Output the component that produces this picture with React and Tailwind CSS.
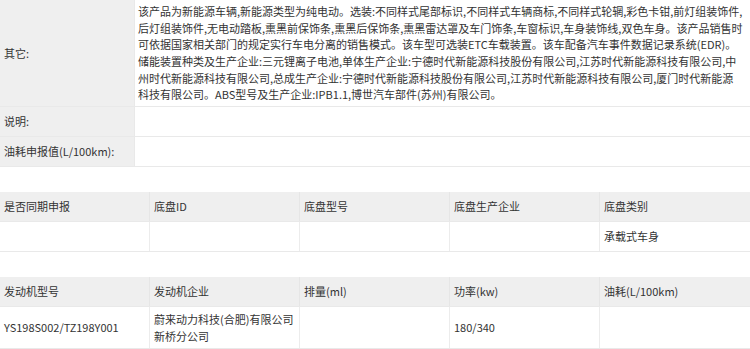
const FONT = { fontFamily: '"Microsoft YaHei", "Noto Sans CJK SC", "Noto Sans", sans-serif' };

const otherLines = [
  '该产品为新能源车辆,新能源类型为纯电动。选装:不同样式尾部标识,不同样式车辆商标,不同样式轮辋,彩色卡钳,前灯组装饰件,',
  '后灯组装饰件,无电动踏板,熏黑前保饰条,熏黑后保饰条,熏黑雷达罩及车门饰条,车窗标识,车身装饰线,双色车身。该产品销售时',
  '可依据国家相关部门的规定实行车电分离的销售模式。该车型可选装ETC车载装置。该车配备汽车事件数据记录系统(EDR)。',
  '储能装置种类及生产企业:三元锂离子电池,单体生产企业:宁德时代新能源科技股份有限公司,江苏时代新能源科技有限公司,中',
  '州时代新能源科技有限公司,总成生产企业:宁德时代新能源科技股份有限公司,江苏时代新能源科技有限公司,厦门时代新能源',
  '科技有限公司。ABS型号及生产企业:IPB1.1,博世汽车部件(苏州)有限公司。',
];

function InfoRow({ label, children, h }) {
  return (
    <div className={`flex border-b border-[#e9e9e9] ${h}`}>
      <div className="w-[135px] shrink-0 bg-[#efefef] border-r border-[#e9e9e9] flex items-center pl-[4px]">{label}</div>
      <div className="flex-1 bg-white pl-[3px] flex items-center">{children}</div>
    </div>
  );
}

function Grid({ head, row, rowH }) {
  return (
    <div>
      <div className="grid grid-cols-5 bg-[#efefef] h-[30px] border-b border-[#e9e9e9]">
        {head.map((t, i) => (
          <div key={i} className="flex items-center pl-[4px] border-r border-[#e6e6e6] last:border-r-0">{t}</div>
        ))}
      </div>
      <div className={`grid grid-cols-5 bg-white border-b border-[#e9e9e9] ${rowH}`}>
        {row.map((t, i) => (
          <div key={i} className="flex items-center pl-[4px] border-r border-[#ececec] last:border-r-0 leading-[17px]">{t}</div>
        ))}
      </div>
    </div>
  );
}

export default function App() {
  return (
    <div className="w-[750px] h-[349px] bg-white text-[11px] text-[#333] overflow-hidden" style={FONT}>
      <InfoRow label="其它:" h="h-[107px]">
        <div className="leading-[16.7px] whitespace-nowrap">
          {otherLines.map((l, i) => <div key={i}>{l}</div>)}
        </div>
      </InfoRow>
      <InfoRow label="说明:" h="h-[30px]" />
      <InfoRow label="油耗申报值(L/100km):" h="h-[30px]" />

      <div className="h-[25px]" />
      <Grid
        head={['是否同期申报', '底盘ID', '底盘型号', '底盘生产企业', '底盘类别']}
        row={['', '', '', '', '承载式车身']}
        rowH="h-[30px]"
      />

      <div className="h-[25px]" />
      <Grid
        head={['发动机型号', '发动机企业', '排量(ml)', '功率(kw)', '油耗(L/100km)']}
        row={['YS198S002/TZ198Y001', <span>蔚来动力科技(合肥)有限公司<br />新桥分公司</span>, '', '180/340', '']}
        rowH="h-[42px]"
      />
    </div>
  );
}
